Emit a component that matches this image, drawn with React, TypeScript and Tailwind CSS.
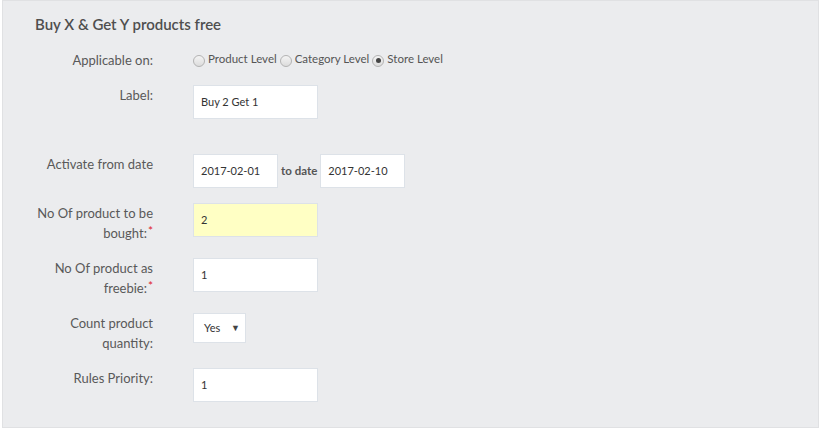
import React from 'react';

const font = { fontFamily: 'Lato, "Open Sans", sans-serif' };

function Row({ lines, required, children, className = '' }: { lines: string[]; required?: boolean; children: React.ReactNode; className?: string }) {
  return (
    <div className={`flex items-start mb-[15px] ${className}`}>
      <div className="w-[120px] shrink-0 flex flex-col items-end text-[13px] leading-5 text-[#595959]">
        {lines.slice(0, -1).map((l) => (
          <span key={l}>{l}</span>
        ))}
        <span className="flex items-start">
          <span>{lines[lines.length - 1]}</span>
          {required && <span className="ml-px text-[#e0242f] text-[12px] leading-[12px] mt-[2px]">*</span>}
        </span>
      </div>
      <div className="ml-10 flex items-center">{children}</div>
    </div>
  );
}

function Input({ value, width = 'w-[125px]', bg = 'bg-white' }: { value: string; width?: string; bg?: string }) {
  return (
    <div className={`${width} h-[34px] ${bg} border border-[#dde2e8] flex items-center pl-[7px] text-[11px] text-[#333]`}>
      {value}
    </div>
  );
}

function Radio({ label, checked }: { label: string; checked?: boolean }) {
  return (
    <span className="inline-flex items-center mr-[3px]">
      <span className="w-3 h-3 mt-[4px] rounded-full border border-[#b3b3b3] bg-gradient-to-b from-[#f4f4f4] to-[#dcdcdc] flex items-center justify-center">
        {checked && <span className="w-[5px] h-[5px] rounded-full bg-[#444]" />}
      </span>
      <span className="ml-[3px] text-[11.5px] text-[#555]">{label}</span>
    </span>
  );
}

export default function App() {
  return (
    <div className="w-[821px] h-[430px] bg-white" style={font}>
      <div className="ml-[2px] mr-[2px] h-[428px] bg-[#ebecee] border border-[#e0e1e3] pt-[12px] pl-[30px]">
        <h2 className="text-[15px] leading-[22px] font-semibold text-[#4f4f4f] ml-[2px]">Buy X &amp; Get Y products free</h2>
        <div className="mt-[15px]">
          <Row lines={['Applicable on:']}>
            <Radio label="Product Level" />
            <Radio label="Category Level" />
            <Radio label="Store Level" checked />
          </Row>
          <Row lines={['Label:']} className="mb-[35px]">
            <Input value="Buy 2 Get 1" />
          </Row>
          <Row lines={['Activate from date']}>
            <Input value="2017-02-01" width="w-[85px]" />
            <span className="mx-[3px] text-[11.5px] font-bold text-[#555]">to date</span>
            <Input value="2017-02-10" width="w-[85px]" />
          </Row>
          <Row lines={['No Of product to be', 'bought:']} required>
            <Input value="2" bg="bg-[#ffffc4]" />
          </Row>
          <Row lines={['No Of product as', 'freebie:']} required>
            <Input value="1" />
          </Row>
          <Row lines={['Count product', 'quantity:']}>
            <div className="w-[53px] h-[30px] bg-white border border-[#dde2e8] flex items-center justify-between pl-[10px] pr-[5px] text-[11px] text-[#333]">
              <span>Yes</span>
              <span className="text-[9px] text-[#444]">▼</span>
            </div>
          </Row>
          <Row lines={['Rules Priority:']}>
            <Input value="1" />
          </Row>
        </div>
      </div>
    </div>
  );
}
